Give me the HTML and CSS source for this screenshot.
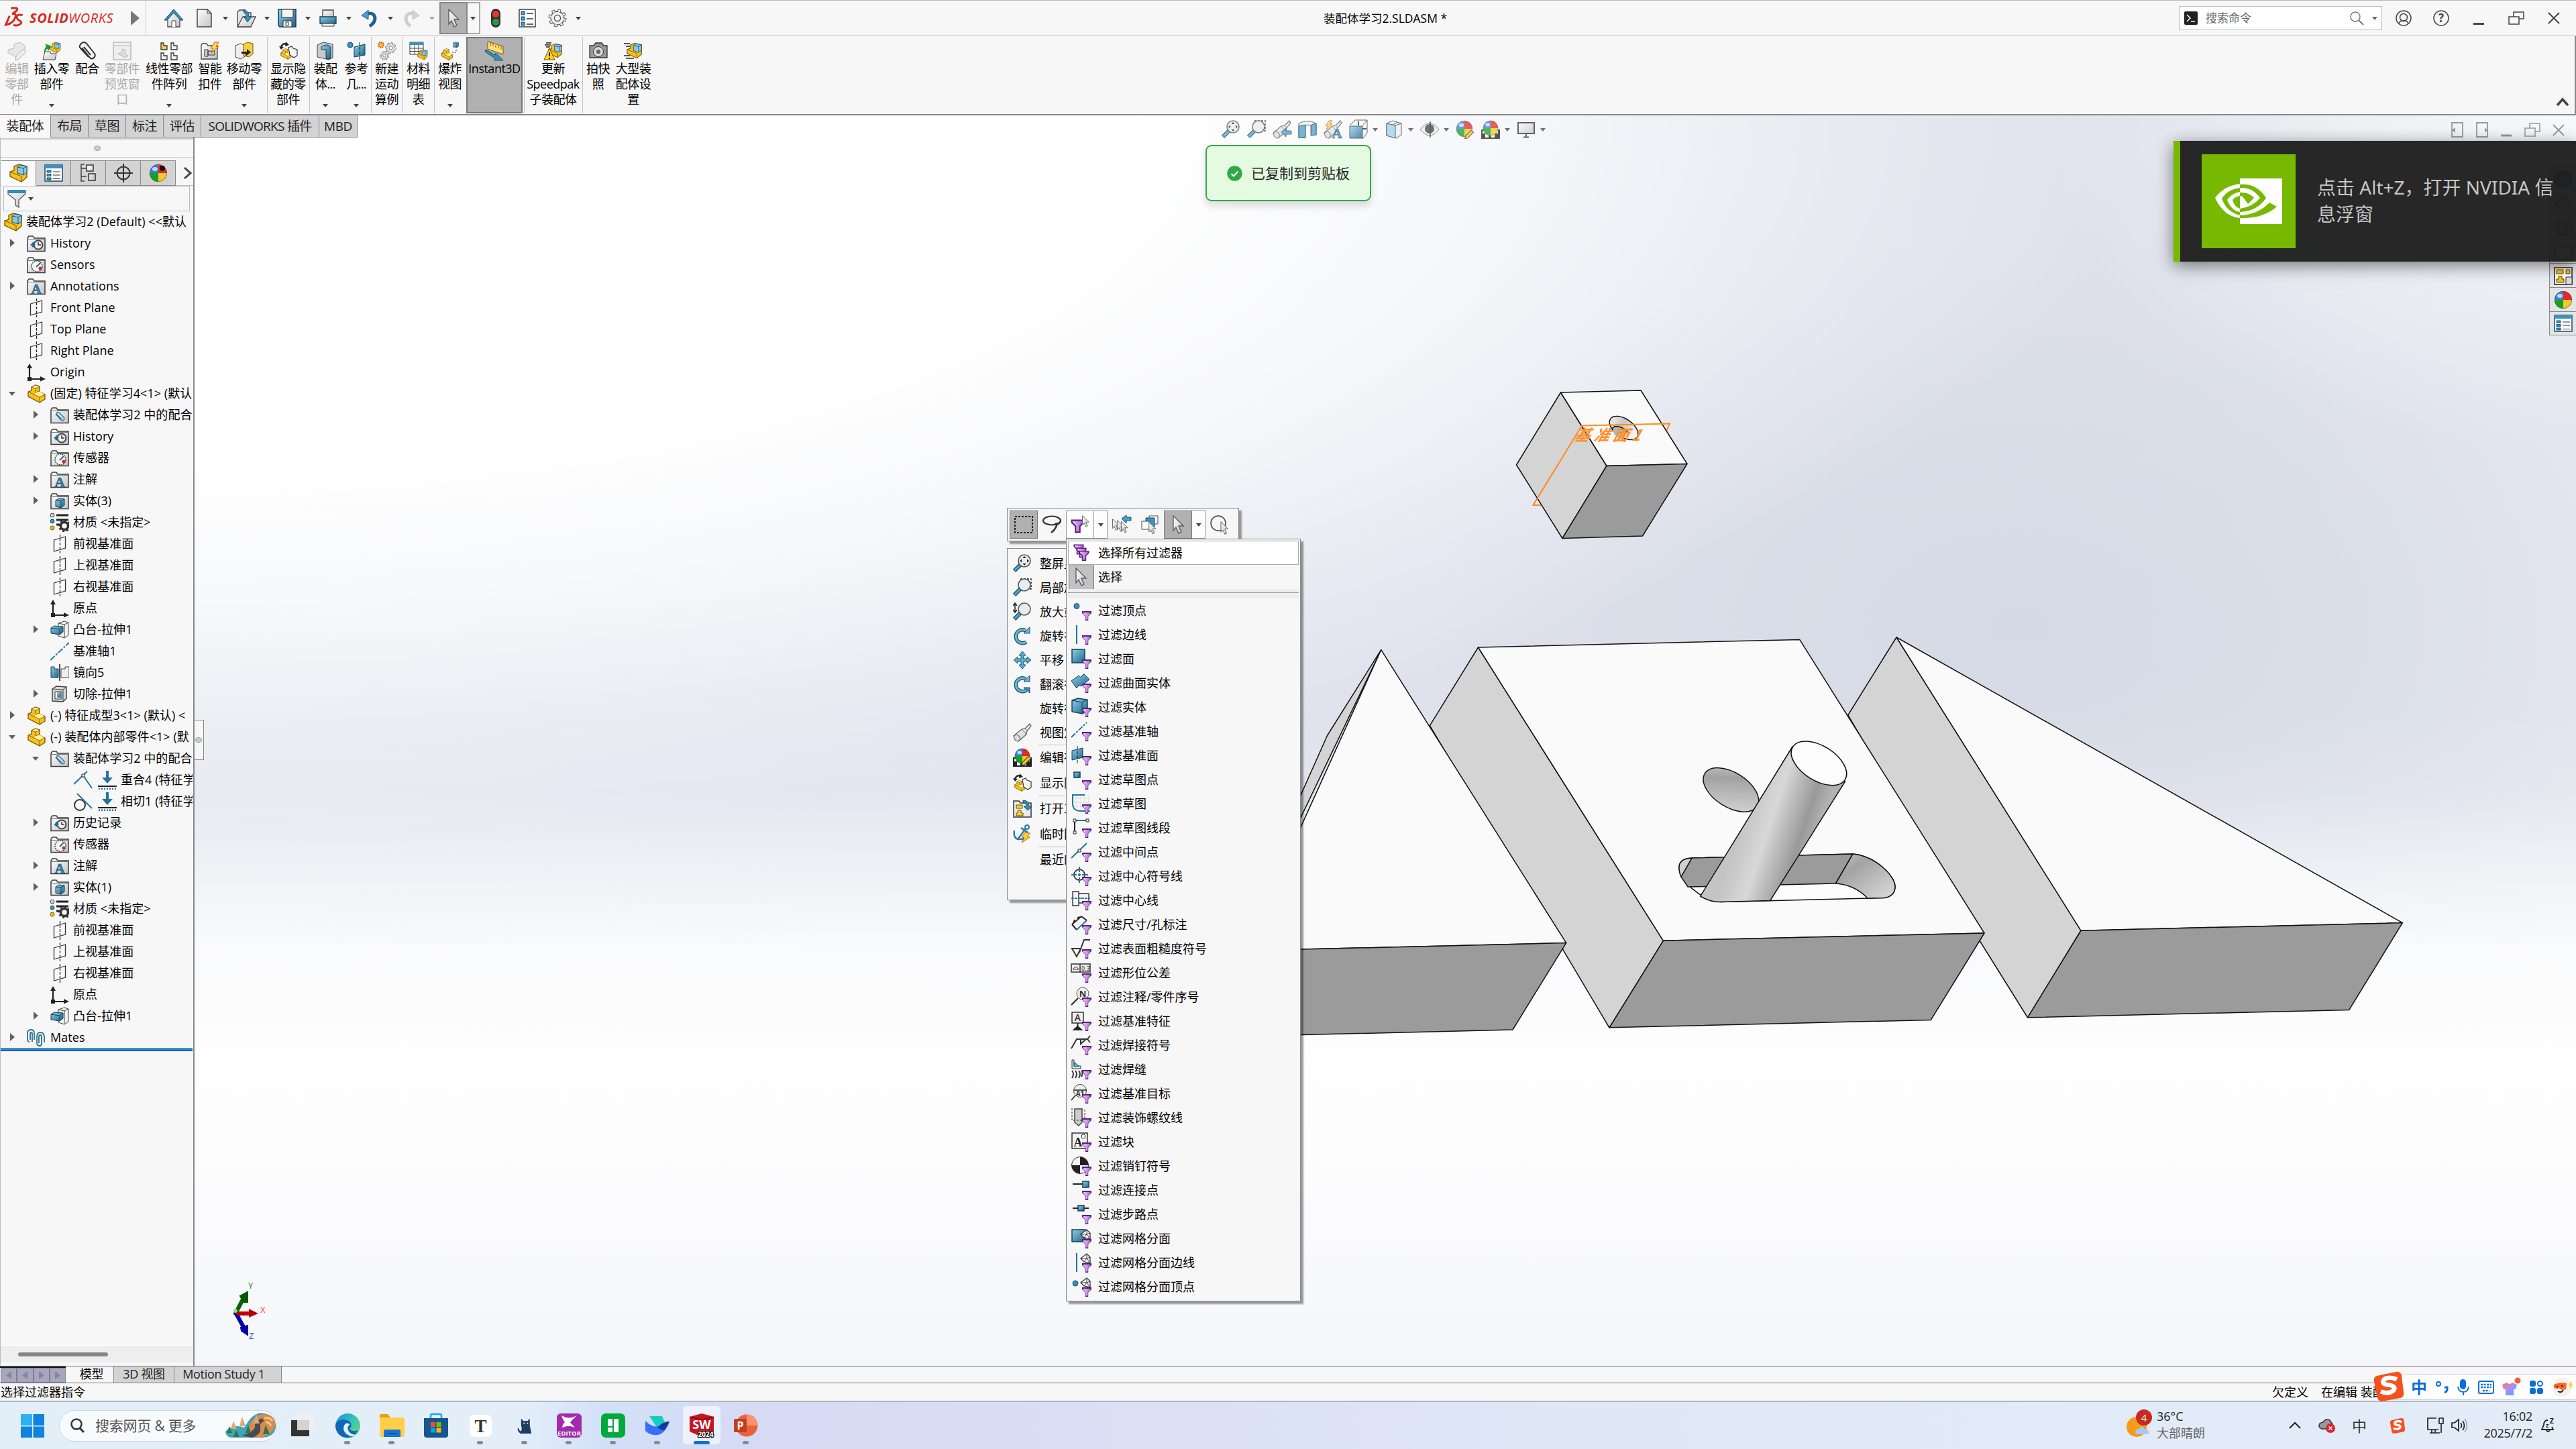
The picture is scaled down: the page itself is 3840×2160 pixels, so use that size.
FILE: index.html
```html
<!DOCTYPE html>
<html lang="zh-CN">
<head>
<meta charset="utf-8">
<title>装配体学习2.SLDASM</title>
<link rel="stylesheet" href="styles.css">
</head>
<body>
<svg class="defs" width="0" height="0">
<defs>
<linearGradient id="gb" x1="0" y1="0" x2="1" y2="1"><stop offset="0" stop-color="#8fd0ec"/><stop offset="1" stop-color="#1f6285"/></linearGradient>
<linearGradient id="gg" x1="0" y1="0" x2="1" y2="1"><stop offset="0" stop-color="#fff"/><stop offset="1" stop-color="#c4c4c8"/></linearGradient>
<linearGradient id="gp" x1="0" y1="0" x2="1" y2="0"><stop offset="0" stop-color="#edc8fa"/><stop offset="1" stop-color="#a45cc8"/></linearGradient>
<linearGradient id="rod" gradientUnits="userSpaceOnUse" x1="2600" y1="1220" x2="2705" y2="1255"><stop offset="0" stop-color="#c4c4c4"/><stop offset=".35" stop-color="#d8d8d8"/><stop offset=".8" stop-color="#999"/><stop offset="1" stop-color="#b2b2b2"/></linearGradient>
<linearGradient id="hole" x1="0" y1="0" x2="1" y2="1"><stop offset="0" stop-color="#ccc"/><stop offset=".3" stop-color="#a2a2a2"/><stop offset="1" stop-color="#dcdcdc"/></linearGradient>
<linearGradient id="bore" x1="0" y1="0" x2="1" y2="0"><stop offset="0" stop-color="#f0f0f0"/><stop offset=".4" stop-color="#c6c6c6"/><stop offset="1" stop-color="#fdfdfd"/></linearGradient>
<linearGradient id="edge" x1="0" y1="0" x2="1" y2="1"><stop offset="0" stop-color="#1c90dc"/><stop offset=".5" stop-color="#37c7b6"/><stop offset="1" stop-color="#76dc61"/></linearGradient>
<linearGradient id="shirt" x1="0" y1="0" x2="1" y2="1"><stop offset="0" stop-color="#ff7a4d"/><stop offset=".5" stop-color="#a98cff"/><stop offset="1" stop-color="#2fb0ff"/></linearGradient>
<symbol id="funnel" viewBox="0 0 13 13"><path d="M1 1h11v2L8.500 6.500v5.500h-4V6.500L1 3z" fill="url(#gp)" stroke="#5b1f7c" stroke-width="1.300"/></symbol>
<symbol id="folder" viewBox="0 0 28 28"><path d="M1 25.500V6l2-3h6l2 3h16v19.500z" fill="url(#gg)" stroke="#3c3c3c" stroke-width="1.500"/><path d="M1 7.500h26" stroke="#777"/></symbol>
<symbol id="hist" viewBox="0 0 28 28"><use href="#folder"/><circle cx="17" cy="16" r="6.500" fill="#eee" stroke="#444" stroke-width="2"/><path d="M17 12v4h4" fill="none" stroke="#333" stroke-width="1.500"/><path d="M5 15l4 5 4-5h-2l2-4c-3 0-5 1-6 4z" fill="#1f6d95"/></symbol>
<symbol id="sens" viewBox="0 0 28 28"><use href="#folder"/><circle cx="15" cy="16" r="8" fill="#f6f6f6" stroke="#444" stroke-width="1.500" stroke-dasharray="2 1.300"/><path d="M14 17l6-6" stroke="#1f6d95" stroke-width="2"/><circle cx="20" cy="19" r="2.500" fill="#d22"/></symbol>
<symbol id="ann" viewBox="0 0 28 28"><use href="#folder"/><text x="14" y="25" text-anchor="middle" class="serif" font-size="21" fill="#3788b0" stroke="#17506e" stroke-width=".7">A</text></symbol>
<symbol id="body" viewBox="0 0 28 28"><use href="#folder"/><path d="M8 13l5-3 8 1v9l-5 4-8-2z" fill="url(#gb)" stroke="#123f58"/><path d="M8 13l8 1v10M16 14l5-3" fill="none" stroke="#123f58"/></symbol>
<symbol id="matef" viewBox="0 0 28 28"><use href="#folder"/><path d="M8 12l7 8q3 3 5 1t-1-5l-6-6q-2-1-3 0t0 3l7 7" fill="none" stroke="#2b7ca4" stroke-width="1.500"/></symbol>
<symbol id="plane" viewBox="0 0 28 28"><path d="M5.500 8l17-5v17l-17 5z" fill="#fafafa" stroke="#333" stroke-width="1.300"/><path d="M14.500 0v28" stroke="#222" stroke-width="1.300" stroke-dasharray="4 2"/></symbol>
<symbol id="orig" viewBox="0 0 28 28"><path d="M4 24V7M4 24h18" stroke="#222" stroke-width="2.200" fill="none"/><path d="M0 8l4-7 4 7zM20 20l8 4-8 3.500zM1 21h6v6H1z" fill="#222"/></symbol>
<symbol id="part" viewBox="0 0 28 28"><path d="M2 11l5-2V4l6-3 6 2v8l8 4v7l-8 5L2 18z" fill="#f5c21d" stroke="#7a5500" stroke-width="1.300"/><path d="M2 11l17 8v8M19 19l8-4M7 4l6 2 6-3M13 6v6l6-2" fill="none" stroke="#8a6300"/><path d="M8 4l5-2.500L18 3l-5 2.500zM14 12l5-1.500 7 4-7 4-8-4z" fill="#fff0a0"/></symbol>
<symbol id="asm" viewBox="0 0 28 28"><path d="M1 12l6-2V4l7-3 12 3v16l-8 7L1 19z" fill="#f5c21d" stroke="#7a5500" stroke-width="1.300"/><path d="M1 12l17 7v8" fill="none" stroke="#7a5500"/><path d="M12 5l5-3 9 2v9l-5 4-9-3z" fill="#8cc8e6" stroke="#174e6b"/><path d="M12 5l9 2v10M21 7l5-3" fill="none" stroke="#174e6b"/></symbol>
<symbol id="mat" viewBox="0 0 28 28"><path d="M9 3h18M9 10h18M9 17h6" stroke="#222" stroke-width="3"/><circle cx="3" cy="3" r="3" fill="#ccc" stroke="#444"/><circle cx="3" cy="12" r="3" fill="#3a93c0" stroke="#174e6b"/><circle cx="3" cy="22" r="3" fill="#f3bd10" stroke="#7a5500"/><circle cx="21" cy="19" r="5.500" fill="none" stroke="#333" stroke-width="3.500"/><circle cx="21" cy="19" r="8" fill="none" stroke="#333" stroke-width="2.500" stroke-dasharray="3 3.200"/></symbol>
<symbol id="boss" viewBox="0 0 28 28"><path d="M12 4l9-3 6 2v19l-6 4-9-3z" fill="#f0f0f0" stroke="#444"/><path d="M12 4l9 2v20M21 6l6-3" fill="none" stroke="#444"/><path d="M1 11l5-3 13 1v8l-5 4-13-2z" fill="url(#gb)" stroke="#123f58"/><path d="M1 11l13 2v8M14 13l5-4" fill="none" stroke="#123f58"/></symbol>
<symbol id="cut" viewBox="0 0 28 28"><path d="M3 6l6-4 15 1v17l-5 5-16-1z" fill="#d8d8d8" stroke="#444" stroke-width="1.500"/><path d="M3 6l16 1v18M19 7l5-4" fill="none" stroke="#444"/><path d="M7 10h10v11H7z" fill="#fff" stroke="#333"/><path d="M10 11h6v8h-6z" fill="url(#gb)"/></symbol>
<symbol id="axis" viewBox="0 0 28 28"><path d="M0 27L28 1" stroke="#25749c" stroke-width="2" stroke-dasharray="9 2 3 2"/></symbol>
<symbol id="mirror" viewBox="0 0 28 28"><path d="M1 5h5v3h6v13H1z" fill="url(#gb)" stroke="#123f58"/><path d="M28 5h-6v3h-6v13h12z" fill="#eee" stroke="#444"/><path d="M14 1v25" stroke="#111" stroke-width="1.500"/></symbol>
<symbol id="coin" viewBox="0 0 28 28"><path d="M0 20L20 1M14 7l13 19" stroke="#25749c" stroke-width="2"/><path d="M12 5h4v4h-4z" fill="#fff" stroke="#222"/></symbol>
<symbol id="tang" viewBox="0 0 28 28"><circle cx="9" cy="19" r="8" fill="none" stroke="#333" stroke-width="2"/><path d="M5 2l22 22" stroke="#25749c" stroke-width="2"/></symbol>
<symbol id="ground" viewBox="0 0 28 28"><path d="M12 0h4v10h6l-8 9-8-9h6z" fill="#25749c"/><path d="M0 23h28" stroke="#222" stroke-width="2"/><path d="M1 27h26" stroke="#25749c" stroke-width="3" stroke-dasharray="2 2"/></symbol>
<symbol id="mates" viewBox="0 0 28 28"><path d="M4 20q-3 0-3-4V7q0-5 5-5t5 5v10M5 17V8q0-2 1.500-2t1.500 2v12M18 22V12q0-2 2-2t2 2v11q0 3-3 3t-4-3V12q0-6 5-6t6 6v9" fill="none" stroke="#2b7390" stroke-width="1.800"/></symbol>
<symbol id="props" viewBox="0 0 28 28"><path d="M1 2h26v24H1z" fill="#fff" stroke="#174e6b" stroke-width="1.500"/><path d="M1 2h26v5H1z" fill="#3a93c0"/><path d="M4 10h6v3H4zM4 15.500h6v3H4zM4 21h6v3H4z" fill="#3a93c0" stroke="#174e6b"/><path d="M13 12h11M13 17h11M13 22.500h11" stroke="#333"/></symbol>
<symbol id="config" viewBox="0 0 28 28"><path d="M8 1H3v25h5M3 7h8M3 19h8" fill="none" stroke="#444" stroke-width="1.500"/><path d="M11 2h10v9H11zM14 15h10v10H14z" fill="url(#gg)" stroke="#333" stroke-width="1.500"/></symbol>
<symbol id="target" viewBox="0 0 28 28"><circle cx="14" cy="14" r="9.500" fill="none" stroke="#333" stroke-width="2"/><path d="M0 14h28M14 0v28" stroke="#333" stroke-width="2"/></symbol>
<symbol id="ball" viewBox="0 0 28 28"><path d="M14 14V1A13 13 0 0 0 1 14z" fill="#3b7de0"/><path d="M14 14V1a13 13 0 0 1 13 13z" fill="#e22b25"/><path d="M14 14H1a13 13 0 0 0 13 13z" fill="#12a31f"/><path d="M14 14h13a13 13 0 0 1-13 13z" fill="#f0c92c"/><circle cx="14" cy="14" r="12.700" fill="none" stroke="#444" stroke-opacity=".6"/><ellipse cx="9" cy="8" rx="4" ry="3" fill="#fff" opacity=".7"/></symbol>
<symbol id="cursor" viewBox="0 0 28 28"><path d="M7 1l15 15h-7l4 9-4 2-4-9-4 5z" fill="url(#gg)" stroke="#555" stroke-width="1.300"/></symbol>
<symbol id="zoomg" viewBox="0 0 28 28"><path d="M2 25l9-9" stroke="#123f58" stroke-width="6"/><path d="M2.500 24.500l8-8" stroke="#4aa3cc" stroke-width="3.500"/><circle cx="17" cy="10" r="9" fill="#e4edf3" stroke="#555" stroke-width="1.600"/></symbol>
<symbol id="zfit" viewBox="0 0 28 28"><use href="#zoomg"/><path d="M17 3l2.500 3h-5zM17 17l2.500-3h-5zM10 10l3-2.500v5zM24 10l-3-2.500v5z" fill="#222"/></symbol>
<symbol id="zarea" viewBox="0 0 28 28"><path d="M11 1h16v15h-4" fill="none" stroke="#222" stroke-width="1.500" stroke-dasharray="3 2"/><use href="#zoomg"/></symbol>
<symbol id="zinout" viewBox="0 0 28 28"><use href="#zoomg"/><path d="M3 2v12M0 5l3-4 3 4M0 11l3 4 3-4" stroke="#222" fill="none" stroke-width="1.500"/></symbol>
<symbol id="rot" viewBox="0 0 28 28"><path d="M20 23a10 10 0 1 1-1-17" fill="none" stroke="#174e6b" stroke-width="5.500"/><path d="M20 23a10 10 0 1 1-1-17" fill="none" stroke="#6bb7d8" stroke-width="3"/><path d="M16 10h9V1z" fill="#6bb7d8" stroke="#174e6b"/></symbol>
<symbol id="roll" viewBox="0 0 28 28"><use href="#rot"/><path d="M16 19h9v8z" fill="#3a8fb8" stroke="#174e6b"/></symbol>
<symbol id="pan" viewBox="0 0 28 28"><path d="M14 1l5 6h-3v5h5V9l6 5-6 5v-3h-5v5h3l-5 6-5-6h3v-5H7v3l-6-5 6-5v3h5V7H9z" fill="#5dabd0" stroke="#174e6b"/></symbol>
<symbol id="scope" viewBox="0 0 28 28"><path d="M1 19L13 9l5-1 7-7 2 3-6 8-1 5L8 27q-5-1-7-8z" fill="url(#gg)" stroke="#555" stroke-width="1.200"/><ellipse cx="6" cy="22" rx="4" ry="5" transform="rotate(-30 6 22)" fill="#ddd" stroke="#555"/><path d="M13 9l7 8M18 8l3 4" stroke="#777"/></symbol>
<symbol id="pencil" viewBox="0 0 14 14"><path d="M1 13l1-4 8-8 3 3-8 8z" fill="#f3c03a" stroke="#553c10"/></symbol>
<symbol id="appear" viewBox="0 0 28 28"><use href="#ball" x="0" y="0" width="26" height="26"/><use href="#pencil" x="12" y="14" width="16" height="15"/></symbol>
<symbol id="scene" viewBox="0 0 28 28"><path d="M0 14h28v14H0z" fill="#222"/><path d="M2 16h5v4H2zM20 16h5v4h-5zM6 21h5v5H6zM15 21h5v5h-5z" fill="#fff"/><use href="#ball" x="2" y="0" width="24" height="24"/></symbol>
<symbol id="editapp" viewBox="0 0 28 28"><use href="#scene"/><use href="#pencil" x="12" y="11" width="16" height="16"/></symbol>
<symbol id="showhide" viewBox="0 0 28 28"><use href="#part" x="1" y="10" width="18" height="17"/><path d="M14 9l5-2 2 3 6 2v9l-5 3-6-4z" fill="#f4f4f4" stroke="#333" stroke-width="1.200"/><path d="M3 9q2-8 9-5" fill="none" stroke="#222" stroke-width="2.500"/><path d="M0 7l3 5 4-4zM10 0l5 5-6 2z" fill="#222"/></symbol>
<symbol id="openasm" viewBox="0 0 28 28"><path d="M1 3h8l2 3h16v21H1z" fill="#ececec" stroke="#333" stroke-width="1.500"/><path d="M5 9h9v5H5zM7 17h5v4h3v4H5v-4h2z" fill="#f6cf3c" stroke="#6a4d00"/><path d="M15 2q9 0 9 9h4l-6 6-6-6h4q0-5-5-6z" fill="#3a8fb8" stroke="#174e6b"/></symbol>
<symbol id="anchor" viewBox="0 0 28 28"><circle cx="21" cy="4" r="3" fill="none" stroke="#2b7ca4" stroke-width="2"/><path d="M19 6L8 21M12 5l10 7M2 9q-2 14 9 13 6 0 9-3" fill="none" stroke="#2b7ca4" stroke-width="2.500"/><path d="M18 12l8 1-5 5 4 1-12 8 4-7-4-1z" fill="#ffd23c" stroke="#b85e00"/></symbol>
<symbol id="cube" viewBox="0 0 28 28"><path d="M1 4l9-3 14 2v15l-7 6L1 21z" fill="url(#gb)" stroke="#123f58" stroke-width="1.400"/><path d="M1 4l15 3v17M16 7l8-4" fill="none" stroke="#123f58"/></symbol>
<symbol id="mesh" viewBox="0 0 16 16"><path d="M1 8l9-7 5 5v9L6 13z" fill="#fff" stroke="#333" stroke-width="1.300"/><path d="M1 8h9l5-2M10 1v7l5 7M10 8l-4 5" fill="none" stroke="#333"/></symbol>
<symbol id="gear" viewBox="0 0 28 28"><circle cx="14" cy="14" r="11" fill="none" stroke="#555" stroke-width="5" stroke-dasharray="4.600 4.040"/><circle cx="14" cy="14" r="10" fill="#eee" stroke="#555" stroke-width="1.300"/><circle cx="14" cy="14" r="11" fill="none" stroke="#eee" stroke-width="3" stroke-dasharray="3 5.640" stroke-dashoffset="-.8"/><circle cx="14" cy="14" r="4.500" fill="#fafafa" stroke="#555" stroke-width="1.400"/></symbol>
<symbol id="sogou" viewBox="0 0 28 28"><path d="M3 5L21 1q3 0 4 3l2 17q0 3-3 4L8 28q-3 0-4-3L1 9q0-3 2-4z" fill="#f4511e"/><path d="M21 8q-7-3-11 0-3 4 3 5 8 1 5 5-4 4-11 1" fill="none" stroke="#fff" stroke-width="4"/></symbol>
<symbol id="bolt" viewBox="0 0 14 18"><path d="M7 1h6L9 7h4L2 17l3-7H1z" fill="#ffd84c" stroke="#c75a10"/></symbol>
<symbol id="home" viewBox="0 0 28 28"><path d="M5 14v13h18V14l-9-9z" fill="url(#gg)" stroke="#444" stroke-width="1.300"/><path d="M11 27v-9h6v9" fill="#fff" stroke="#444"/><path d="M14 1L0 17h4L14 6l10 11h4z" fill="#3a93c0" stroke="#123f58"/></symbol>
</defs>
</svg>

<header class="titlebar">
  <div class="brand">
    <svg class="ds" viewBox="0 0 32 32"><path d="M9 2h8q4 1 0 5l-6 4q7-1 5 5-3 10-15 12L7 14M27 13q-9-2-9 3 0 3 5 6t-2 6q-4 2-8 0" fill="none" stroke="#d8281e" stroke-width="3"/></svg>
    <span class="wordmark"><b>SOLID</b>WORKS</span>
    <svg class="play" viewBox="0 0 13 22"><path d="M0 0l13 11L0 22z" fill="#777"/></svg>
  </div>
  <nav class="quick">
    <svg class="i q1"><use href="#home"/></svg>
    <svg class="i q2" viewBox="0 0 28 28"><path d="M3 1h15l6 6v20H3z" fill="url(#gg)" stroke="#444" stroke-width="1.500"/><path d="M18 1v6h6" fill="none" stroke="#444"/></svg><i class="dd"></i>
    <svg class="i q3" viewBox="0 0 28 28"><path d="M1 27V5l3-3h7v4h10v21z" fill="#e5e5e5" stroke="#444" stroke-width="1.300"/><path d="M1 27L9 12h19l-7 15z" fill="url(#gg)" stroke="#444" stroke-width="1.300"/><path d="M11 1q7 3 7 11h4l-6 8-6-8h4q0-6-5-9z" fill="#3a8fb8" stroke="#174e6b"/></svg><i class="dd"></i>
    <svg class="i q4" viewBox="0 0 28 28"><path d="M1 1h26v26H3l-2-2z" fill="url(#gb)" stroke="#123f58" stroke-width="1.500"/><path d="M6 1h17v12H6zM8 18h13v9H8z" fill="#f4f4f4" stroke="#333"/><path d="M12 20h4v5h-4z" fill="#fff" stroke="#333"/></svg><i class="dd"></i>
    <svg class="i q5" viewBox="0 0 28 28"><path d="M6 13V2h16v11" fill="url(#gg)" stroke="#444" stroke-width="1.300"/><path d="M2 12h24v10H2z" fill="url(#gb)" stroke="#123f58" stroke-width="1.300"/><path d="M5 22h18v4H5z" fill="#fff" stroke="#333"/></svg><i class="dd"></i>
    <svg class="i q6" viewBox="0 0 28 28"><path d="M7 9q13-6 15 5 0 7-8 12" fill="none" stroke="#1f6285" stroke-width="5"/><path d="M2 10L12 2v14z" fill="#4a9ec6" stroke="#1f6285"/></svg><i class="dd"></i>
    <svg class="i q7" viewBox="0 0 28 28"><path d="M21 9Q8 3 6 14q0 7 7 12" fill="none" stroke="#cfcfcf" stroke-width="5"/><path d="M26 10L16 2v14z" fill="#d5d5d5" stroke="#c0c0c0"/></svg><i class="dd faint"></i>
    <span class="pick"><svg class="i"><use href="#cursor"/></svg></span><span class="pickdd"><i class="dd"></i></span>
    <svg class="i q8" viewBox="0 0 28 28"><rect x="7" y="0" width="14" height="28" rx="7" fill="#333"/><circle cx="14" cy="8" r="5" fill="#e33a28"/><circle cx="14" cy="20" r="5" fill="#2a9a40"/></svg>
    <svg class="i q9" viewBox="0 0 28 28"><path d="M2 1h24v26H2z" fill="#fff" stroke="#444" stroke-width="1.500"/><path d="M5 4h5v5H5zM5 12h5v5H5zM5 20h5v5H5z" fill="#4a9ec6" stroke="#123f58"/><path d="M13 7h10M13 15h10M13 23h10" stroke="#333" stroke-width="1.500"/></svg>
    <svg class="i q10"><use href="#gear"/></svg><i class="dd"></i>
  </nav>
  <div class="doctitle">装配体学习2.SLDASM *</div>
  <div class="search"><svg class="prompt" viewBox="0 0 20 20"><rect width="20" height="20" rx="2" fill="#222"/><path d="M4 5l5 5-5 5M10 15h6" fill="none" stroke="#fff" stroke-width="1.500"/></svg><span>搜索命令</span><svg class="mag" viewBox="0 0 20 20"><circle cx="8" cy="8" r="7" fill="none" stroke="#777" stroke-width="1.500"/><path d="M13 13l7 7" stroke="#777" stroke-width="2"/></svg><i class="dd"></i></div>
  <div class="winctl">
    <svg width="24" height="24" viewBox="0 0 24 24"><g fill="none" stroke="#444" stroke-width="1.500"><circle cx="12" cy="12" r="11"/><circle cx="12" cy="11" r="5.500"/><path d="M5 20q2-5 7-4 5-1 7 4"/></g></svg>
    <svg width="24" height="24" viewBox="0 0 24 24"><circle cx="12" cy="12" r="11" fill="none" stroke="#444" stroke-width="1.500"/><text x="12" y="18" text-anchor="middle" font-size="17" font-weight="700" fill="#444">?</text></svg>
    <svg width="24" height="24" viewBox="0 0 24 24"><path d="M4 20.500h16" stroke="#444" stroke-width="3"/></svg>
    <svg width="24" height="24" viewBox="0 0 24 24"><g fill="none" stroke="#444" stroke-width="1.500"><path d="M1 10h15v11H1zM8 10V3h15v10h-7"/></g></svg>
    <svg width="24" height="24" viewBox="0 0 24 24"><path d="M4 4l16 16M20 4L4 20" stroke="#333" stroke-width="1.800"/></svg>
  </div>
</header>

<section class="ribbon">
  <div class="cmd off w50"><svg class="i" viewBox="0 0 28 28"><path d="M1 12l9-2V4l8-3 8 5v10l-9 9-4-2-12-6z" fill="#e8e8e8" stroke="#bbb"/><path d="M13 22l11-11 4 4-11 11-5 2z" fill="#eee" stroke="#aaa"/></svg><span>编辑</span><span>零部</span><span>件</span></div>
  <div class="cmd w54"><svg class="i" viewBox="0 0 28 28"><use href="#asm" x="11" y="0" width="17" height="18"/><path d="M1 27l3-12h8l1 3h8l-2 9z" fill="url(#gg)" stroke="#444"/><path d="M4 15q0-7 5-7M6 5l6 2-3 5z" fill="#1d9c2a" stroke="#1d9c2a" stroke-width="2"/></svg><span>插入零</span><span>部件</span><i class="dd"></i></div>
  <div class="cmd w52"><svg class="i" viewBox="0 0 28 28"><path d="M6 9l12 15q3 3 6 0t1-6L13 3Q9-1 5 3t-1 7l12 13M9 8l10 12" fill="none" stroke="#333" stroke-width="2"/></svg><span>配合</span></div>
  <div class="cmd off w52"><svg class="i" viewBox="0 0 28 28"><path d="M1 1h26v26H1z" fill="#eee" stroke="#bbb" stroke-width="1.500"/><path d="M1 6h26M8 18l6-2v-5l5 1v6l4 3-5 3z" fill="#ddd" stroke="#bbb"/></svg><span>零部件</span><span>预览窗</span><span>口</span></div>
  <div class="cmd w88"><svg class="i" viewBox="0 0 28 28"><g fill="#eee" stroke="#333" stroke-width="1.300"><path d="M2 2h4v4h5v6H2z" fill="#f6cf3c"/><path d="M17 2h4v4h5v6h-9zM2 17h4v4h5v6H2zM17 17h4v4h5v6h-9z"/></g></svg><span>线性零部</span><span>件阵列</span><i class="dd"></i></div>
  <div class="cmd w34"><svg class="i" viewBox="0 0 28 28"><path d="M1 26V5l2-2h6l2 3h14v20z" fill="url(#gg)" stroke="#444" stroke-width="1.300"/><path d="M6 12h5v10H6zM11 14h10v6H11z" fill="#ccc" stroke="#333"/><use href="#bolt" x="14" y="0" width="14" height="18"/></svg><span>智能</span><span>扣件</span></div>
  <div class="cmd w68"><svg class="i" viewBox="0 0 28 28"><path d="M1 6l7-3 7 2v17l-6 4-8-3z" fill="#eee" stroke="#444"/><path d="M13 4l6-3 8 2v15l-6 5-8-2z" fill="#f6cf3c" stroke="#7a5500"/><path d="M10 15h8v-4l6 5-8 6v-4h-6z" fill="#222"/></svg><span>移动零</span><span>部件</span><i class="dd"></i></div>
  <div class="cmd sep w63"><svg class="i"><use href="#showhide"/></svg><span>显示隐</span><span>藏的零</span><span>部件</span></div>
  <div class="cmd sep w48"><svg class="i" viewBox="0 0 28 28"><path d="M2 5l9-4 14 3v20l-6 3-17-4z" fill="#c9c9c9" stroke="#444"/><path d="M8 8q8-6 14 0v17q-4 2-7 0V12H8z" fill="url(#gb)" stroke="#123f58"/></svg><span>装配</span><span>体...</span><i class="dd"></i></div>
  <div class="cmd w44"><svg class="i" viewBox="0 0 28 28"><circle cx="5" cy="5" r="4" fill="#3a93c0" stroke="#174e6b"/><path d="M11 8l16-4v16l-16 3z" fill="url(#gb)" stroke="#123f58"/><path d="M19 1v26" stroke="#222" stroke-dasharray="5 2"/></svg><span>参考</span><span>几...</span><i class="dd"></i></div>
  <div class="cmd sep w47"><svg class="i" viewBox="0 0 28 28"><circle cx="5" cy="5" r="4" fill="#ffb63c" stroke="#d06a10" stroke-dasharray="2 1" stroke-width="2"/><use href="#gear" x="11" y="1" width="17" height="17"/><use href="#gear" x="3" y="14" width="14" height="14"/></svg><span>新建</span><span>运动</span><span>算例</span></div>
  <div class="cmd sep w47"><svg class="i" viewBox="0 0 28 28"><path d="M1 1h20v18H1z" fill="#fff" stroke="#333"/><path d="M1 1h20v4H1z" fill="#3a93c0"/><path d="M1 10h20M1 14.500h20M8 5v14M14 5v14" stroke="#444"/><use href="#asm" x="12" y="11" width="16" height="17"/></svg><span>材料</span><span>明细</span><span>表</span></div>
  <div class="cmd sep w47"><svg class="i" viewBox="0 0 28 28"><use href="#part" x="0" y="10" width="18" height="18"/><use href="#cube" x="18" y="0" width="10" height="11"/><path d="M23 12v4h-8" fill="none" stroke="#222" stroke-dasharray="2 2"/></svg><span>爆炸</span><span>视图</span><i class="dd"></i></div>
  <div class="cmd on w84"><svg class="i" viewBox="0 0 28 28"><path d="M4 0l23 7v12L4 11z" fill="#ffe27a" stroke="#7a5500"/><path d="M8 2v5M12 3v4M16 5v4M20 6v4M24 7v5" stroke="#7a5500"/><path d="M1 12l14 8 1-3 11 11-13 0 1-3L0 15z" fill="#3a8fb8" stroke="#174e6b"/></svg><span>Instant3D</span></div>
  <div class="cmd sep w87"><svg class="i" viewBox="0 0 28 28"><use href="#asm" x="6" y="0" width="22" height="27"/><path d="M3 2h8M1 5h9M3 8h6" stroke="#222" stroke-width="1.500"/><path d="M8 10l8 17H0z" fill="#ffd21c" stroke="#7a5500"/><path d="M8 16v6M8 24v2" stroke="#222" stroke-width="2"/></svg><span>更新</span><span>Speedpak</span><span>子装配体</span></div>
  <div class="cmd sep w47"><svg class="i" viewBox="0 0 28 28"><path d="M1 6h6l3-4h9l3 4h5v18H1z" fill="#999" stroke="#333" stroke-width="1.300"/><circle cx="14" cy="15" r="7.500" fill="#ddd" stroke="#333"/><circle cx="14" cy="15" r="4" fill="#666" stroke="#eee"/></svg><span>拍快</span><span>照</span></div>
  <div class="cmd w58"><svg class="i" viewBox="0 0 28 28"><use href="#asm" x="4" y="0" width="24" height="27"/><path d="M0 3h9M3 7h7M0 21h9M3 25h12" stroke="#222" stroke-width="1.500"/></svg><span>大型装</span><span>配体设</span><span>置</span></div>
  <svg class="collapse" width="20" height="14" viewBox="0 0 20 14"><path d="M2 12l8-9 8 9" fill="none" stroke="#444" stroke-width="3.500"/></svg>
</section>

<main class="work">
  <div class="cmtabs"><b class="cur">装配体</b><b>布局</b><b>草图</b><b>标注</b><b>评估</b><b>SOLIDWORKS 插件</b><b>MBD</b></div>
  <aside class="panel">
    <div class="grip"><i></i></div>
    <div class="ptabs">
      <span class="cur"><svg class="i"><use href="#asm"/></svg></span><span><svg class="i"><use href="#props"/></svg></span><span><svg class="i"><use href="#config"/></svg></span><span><svg class="i"><use href="#target"/></svg></span><span><svg class="i" viewBox="0 0 28 28"><use href="#ball"/><circle cx="20" cy="7" r="4" fill="#200"/></svg></span>
      <svg class="more" width="14" height="20" viewBox="0 0 14 20"><path d="M2 2l9 8-9 8" fill="none" stroke="#444" stroke-width="3"/></svg>
    </div>
    <div class="filter"><svg class="i" viewBox="0 0 28 28"><path d="M1 2h26v5l-10 9v11l-5-3v-8L1 7z" fill="url(#gg)" stroke="#555" stroke-width="1.300"/><path d="M1 1h26v5H1z" fill="#2f8dba"/></svg><i class="dd"></i></div>
    <ul class="tree">
      <li class="root"><svg class="i"><use href="#asm"/></svg>装配体学习2 (Default) &lt;&lt;默认</li>
      <li><i class="r"></i><svg class="i"><use href="#hist"/></svg>History</li>
      <li><i></i><svg class="i"><use href="#sens"/></svg>Sensors</li>
      <li><i class="r"></i><svg class="i"><use href="#ann"/></svg>Annotations</li>
      <li><i></i><svg class="i"><use href="#plane"/></svg>Front Plane</li>
      <li><i></i><svg class="i"><use href="#plane"/></svg>Top Plane</li>
      <li><i></i><svg class="i"><use href="#plane"/></svg>Right Plane</li>
      <li><i></i><svg class="i"><use href="#orig"/></svg>Origin</li>
      <li><i class="d"></i><svg class="i"><use href="#part"/></svg>(固定) 特征学习4&lt;1&gt; (默认</li>
      <li class="l2"><i class="r"></i><svg class="i"><use href="#matef"/></svg>装配体学习2 中的配合</li>
      <li class="l2"><i class="r"></i><svg class="i"><use href="#hist"/></svg>History</li>
      <li class="l2"><i></i><svg class="i"><use href="#sens"/></svg>传感器</li>
      <li class="l2"><i class="r"></i><svg class="i"><use href="#ann"/></svg>注解</li>
      <li class="l2"><i class="r"></i><svg class="i"><use href="#body"/></svg>实体(3)</li>
      <li class="l2"><i></i><svg class="i"><use href="#mat"/></svg>材质 &lt;未指定&gt;</li>
      <li class="l2"><i></i><svg class="i"><use href="#plane"/></svg>前视基准面</li>
      <li class="l2"><i></i><svg class="i"><use href="#plane"/></svg>上视基准面</li>
      <li class="l2"><i></i><svg class="i"><use href="#plane"/></svg>右视基准面</li>
      <li class="l2"><i></i><svg class="i"><use href="#orig"/></svg>原点</li>
      <li class="l2"><i class="r"></i><svg class="i"><use href="#boss"/></svg>凸台-拉伸1</li>
      <li class="l2"><i></i><svg class="i"><use href="#axis"/></svg>基准轴1</li>
      <li class="l2"><i></i><svg class="i"><use href="#mirror"/></svg>镜向5</li>
      <li class="l2"><i class="r"></i><svg class="i"><use href="#cut"/></svg>切除-拉伸1</li>
      <li><i class="r"></i><svg class="i"><use href="#part"/></svg>(-) 特征成型3&lt;1&gt; (默认) &lt;</li>
      <li><i class="d"></i><svg class="i"><use href="#part"/></svg>(-) 装配体内部零件&lt;1&gt; (默</li>
      <li class="l2"><i class="d"></i><svg class="i"><use href="#matef"/></svg>装配体学习2 中的配合</li>
      <li class="l3"><svg class="i"><use href="#coin"/></svg><svg class="i"><use href="#ground"/></svg>重合4 (特征学</li>
      <li class="l3"><svg class="i"><use href="#tang"/></svg><svg class="i"><use href="#ground"/></svg>相切1 (特征学</li>
      <li class="l2"><i class="r"></i><svg class="i"><use href="#hist"/></svg>历史记录</li>
      <li class="l2"><i></i><svg class="i"><use href="#sens"/></svg>传感器</li>
      <li class="l2"><i class="r"></i><svg class="i"><use href="#ann"/></svg>注解</li>
      <li class="l2"><i class="r"></i><svg class="i"><use href="#body"/></svg>实体(1)</li>
      <li class="l2"><i></i><svg class="i"><use href="#mat"/></svg>材质 &lt;未指定&gt;</li>
      <li class="l2"><i></i><svg class="i"><use href="#plane"/></svg>前视基准面</li>
      <li class="l2"><i></i><svg class="i"><use href="#plane"/></svg>上视基准面</li>
      <li class="l2"><i></i><svg class="i"><use href="#plane"/></svg>右视基准面</li>
      <li class="l2"><i></i><svg class="i"><use href="#orig"/></svg>原点</li>
      <li class="l2"><i class="r"></i><svg class="i"><use href="#boss"/></svg>凸台-拉伸1</li>
      <li><i class="r"></i><svg class="i"><use href="#mates"/></svg>Mates</li>
    </ul>
    <div class="rollback"></div>
    <div class="hscroll"><i></i></div>
  </aside>
  <section class="view">
    <svg class="model" viewBox="290 172 3550 1864">
      <g stroke="#111" stroke-width="1.500" stroke-linejoin="round">
        <path d="M2326.500 585L2395 694.500 2329 802.500 2260.500 693z" fill="#d4d4d4"/>
        <path d="M2326.500 585L2446 582 2515 691.500 2395 694.500z" fill="#fafafa"/>
        <path d="M2395 694.500L2515 691.500 2448.500 799 2329 802.500z" fill="#9b9b9b"/>
        <ellipse cx="2420.500" cy="638" rx="24" ry="13.500" transform="rotate(34 2420.500 638)" fill="url(#bore)"/>
        <path d="M2406 647q-4-12 5-12 9 1 16 9-3 6-12 9-6-2-9-6z" fill="#b4b4b4" stroke="none"/>
        <path d="M2403 640q2-6 10-4 9 2 14 9" fill="none"/>
        <path d="M2827 950L3102 1387 3022.600 1517 2951.500 1403 2754.800 1066z" fill="#d4d4d4"/>
        <path d="M2827 950L3581.400 1375.600 3102 1387.300z" fill="#fafafa"/>
        <path d="M3102 1387.300L3581.400 1375.600 3501.800 1505.400 3022.600 1516.800z" fill="#9b9b9b"/>
        <path d="M2203.500 965L2479.400 1402.300 2399 1532 2131.400 1081.600z" fill="#d4d4d4"/>
        <path d="M2203.500 965L2682.700 953.400 2958 1391 2479.400 1402.300z" fill="#fafafa"/>
        <path d="M2479.400 1402.300L2958 1391 2878.400 1520.400 2399.200 1531.800z" fill="#9b9b9b"/>
        <path d="M2058.800 968.700L1978.500 1096.500 1900 1273V1300z" fill="#d4d4d4"/>
        <path d="M2058.800 968.700L2334.700 1405.600 1800 1418.500V1540z" fill="#fafafa" stroke="none"/>
        <path d="M1900 1319L2058.800 968.700 2334.700 1405.600 1800 1418.500" fill="#fafafa"/>
        <path d="M2334.700 1405.600L2255 1535 1800 1546V1418.500z" fill="#9b9b9b"/>
      </g>
      <g stroke="#111" stroke-width="1.500">
        <path d="M2522 1279L2762 1273C2795 1276 2825 1305 2825 1322 2825 1334 2815 1338 2807 1338.500L2565 1344.500C2535 1342 2503 1312 2503 1293 2503 1283 2510 1279.500 2522 1279z" fill="#fdfdfd"/>
        <path d="M2522 1279L2762 1273 2736.400 1317 2516 1322 2506 1307z" fill="#9b9b9b"/>
        <path d="M2522 1279Q2503 1280 2503 1293 2503 1301 2506 1307z" fill="#d0d0d0"/>
        <path d="M2762 1273C2795 1276 2825 1305 2825 1322 2825 1334 2815 1338 2807 1338.500L2784 1339Q2765 1319 2736.400 1317z" fill="url(#hole)"/>
        <ellipse cx="2580.300" cy="1177.400" rx="46" ry="25.800" transform="rotate(32.200 2580.300 1177.400)" fill="url(#hole)"/>
        <path d="M2672 1113L2534.700 1336Q2550 1345 2565 1344.500L2638.800 1342.400 2750.500 1165z" fill="url(#rod)"/>
        <ellipse cx="2711.400" cy="1137.800" rx="46" ry="25.800" transform="rotate(32.200 2711.400 1137.800)" fill="#fdfdfd"/>
      </g>
      <path d="M2297 753h-11.600L2358 634.500 2489 631.600 2484.800 641" fill="none" stroke="#ff8a1a" stroke-width="2"/>
      <g class="label" transform="translate(2346 657) skewX(-28)"><text x="0" y="0">基</text><text x="29" y="0">准</text><text x="57" y="0">面</text><text x="85" y="0">1</text></g>
      <g stroke-linecap="round"><path d="M351 1958L362 1937" stroke="#006400" stroke-width="6"/><path d="M358 1932l11-6v15l-6 0z" fill="#005a00" stroke="#005a00" stroke-width="2"/><path d="M352 1958l12 22" stroke="#0000a8" stroke-width="6"/><path d="M359 1979l10-3v14l-9-6z" fill="#0000a8" stroke="#0000a8" stroke-width="2"/><path d="M355 1958h16" stroke="#c00000" stroke-width="6"/><path d="M371 1951l14 7-14 6z" fill="#b80000"/><circle cx="351" cy="1954" r="3" fill="#8fe08f"/></g>
      <g font-size="13"><text x="370" y="1921" fill="#1a8a1a">Y</text><text x="388" y="1957" fill="#ff4040">X</text><text x="371" y="1996" fill="#4444ff">Z</text></g>
    </svg>
    <div class="handle"><i></i></div>
    <nav class="hud">
      <svg class="i"><use href="#zfit"/></svg><svg class="i"><use href="#zarea"/></svg><svg class="i" viewBox="0 0 28 28"><use href="#scope"/><path d="M13 18l7-6v4h8v5h-8v4z" fill="#4a9ec6" stroke="#174e6b"/></svg><svg class="i" viewBox="0 0 28 28"><path d="M1 5q13-7 26 0v17q-5 0-8 1V8q-4-2-8 0v19L1 25z" fill="#eee" stroke="#444"/><path d="M1 9l10-2v18L1 27zM20 7l7-2v17l-7 1z" fill="#4a9ec6" stroke="#123f58"/></svg><svg class="i" viewBox="0 0 28 28"><use href="#scope"/><use href="#bolt" x="1" y="0" width="14" height="15"/><text x="20" y="27" text-anchor="middle" class="serif" font-size="21" fill="#3788b0" stroke="#17506e" stroke-width=".7">A</text></svg><svg class="i" viewBox="0 0 28 28"><path d="M9 0h18v19M1 8l8-8M20 8l7-8M20 28l7-9" fill="none" stroke="#333"/><path d="M1 9h19v18H1z" fill="url(#gb)" stroke="#123f58"/><path d="M14 2v6M26 13h-6" stroke="#222" stroke-width="2"/></svg><i class="dd"></i>
      <svg class="i" viewBox="0 0 28 28"><path d="M3 5l9-4 13 4v17l-8 5L3 23z" fill="#f0f0f0" stroke="#333"/><path d="M3 5l13 3v19L3 23z" fill="#9fd2ea" stroke="#123f58"/><path d="M12 7l8-4M16 8l9-3" stroke="#333"/></svg><i class="dd"></i>
      <svg class="i" viewBox="0 0 28 28"><path d="M0 14Q14-4 28 14 14 32 0 14z" fill="#eee" stroke="#666"/><circle cx="14" cy="13" r="7" fill="#444"/><path d="M15 2v24" stroke="#222" stroke-width="1.500"/></svg><i class="dd"></i>
      <svg class="i"><use href="#appear"/></svg><svg class="i"><use href="#scene"/></svg><i class="dd"></i>
      <svg class="i" viewBox="0 0 28 28"><path d="M2 4h24v16H2z" fill="url(#gg)" stroke="#333" stroke-width="2"/><path d="M14 21v4M10 25.500h8" stroke="#333" stroke-width="2"/></svg><i class="dd"></i>
    </nav>
    <div class="docctl">
      <svg width="18" height="24" viewBox="0 0 18 24"><path d="M1 1h16v21H1z" fill="none" stroke="#999" stroke-width="1.800"/><path d="M6 8v8l-5-4z" fill="#999"/></svg>
      <svg width="18" height="24" viewBox="0 0 18 24"><path d="M1 1h16v21H1z" fill="none" stroke="#999" stroke-width="1.800"/><path d="M13 8v8l4-4z" fill="#999"/></svg>
      <svg width="16" height="24" viewBox="0 0 16 24"><path d="M0 20h16" stroke="#999" stroke-width="3"/></svg>
      <svg width="24" height="24" viewBox="0 0 24 24"><path d="M1 9h15v12H1zM8 9V2h15v12h-7" fill="none" stroke="#999" stroke-width="1.500"/></svg>
      <svg width="16" height="24" viewBox="0 0 16 24"><path d="M0 4l16 16M16 4L0 20" stroke="#999" stroke-width="2"/></svg>
    </div>
    <div class="toast"><svg width="23" height="23" viewBox="0 0 23 23"><circle cx="11.500" cy="11.500" r="11.200" fill="#31a847"/><path d="M6.500 12l3.500 3.500 6.500-7" fill="none" stroke="#fff" stroke-width="2"/></svg>已复制到剪贴板</div>
    <div class="taskpane">
      <span><svg class="i" viewBox="0 0 28 28"><circle cx="14" cy="14" r="14" fill="#1c5674"/><path d="M11 9l7 5-7 5z" fill="none" stroke="#fff"/></svg></span><span><svg class="i"><use href="#home"/></svg></span><span><svg class="i" viewBox="0 0 28 28"><path d="M3 5l5-3 3 1 4-2 4 1 4-1 3 2v20l-6 4-8-1-9-2z" fill="#aaa" stroke="#222"/><path d="M8 6v20M14 5v20M20 5v20" stroke="#222"/></svg></span><span><svg class="i"><use href="#folder"/></svg></span><span><svg class="i" viewBox="0 0 28 28"><path d="M1 2h26v25H1z" fill="#fff" stroke="#222" stroke-width="1.500"/><path d="M4 5h10v6H4zM18 5h6v6h-6zM7 15h5v4h3v5H4v-5h3z" fill="#f1c21c" stroke="#5a4300"/><path d="M18 16h9v11h-9z" fill="#ddd" stroke="#333"/></svg></span><span><svg class="i"><use href="#ball"/></svg></span><span><svg class="i"><use href="#props"/></svg></span>
    </div>
    <div class="nvidia">
      <svg width="140" height="140" viewBox="0 0 140 140"><rect width="140" height="140" fill="#76b900"/><path d="M57 36h63v68H57z" fill="#fff"/><path d="M57 44Q33 47 20 65 33 93 57 95v-4Q37 86 30 66 39 52 57 50z" fill="#fff"/><path d="M57 56Q45 58 38 68 44 84 57 86v-5Q49 79 46 68 50 63 57 62z" fill="#fff"/><path d="M57 45Q82 43 96 65 83 85 57 86v-5Q77 78 87 65 76 49 57 50z" fill="#76b900"/><path d="M57 57Q70 56 78 65L69 74 61 63 57 62zM57 91Q84 90 101 72L112 78Q92 96 57 95z" fill="#76b900"/></svg>
      <p>点击 Alt+Z，打开 NVIDIA 信息浮窗</p>
    </div>
    <div class="ctxbar">
      <span class="on"><svg class="i" viewBox="0 0 28 28"><path d="M1 2h26v24H1z" fill="none" stroke="#222" stroke-width="2" stroke-dasharray="3 2"/></svg></span>
      <span><svg class="i" viewBox="0 0 28 28"><ellipse cx="14" cy="8" rx="13" ry="6.500" fill="none" stroke="#333" stroke-width="2.200"/><path d="M27 9q-3 6-9 4m4-2q-1 9-9 15" fill="none" stroke="#333" stroke-width="2.500"/></svg></span>
      <span class="hot"><svg class="i" viewBox="0 0 28 28"><use href="#funnel" x="0" y="5" width="21" height="23"/><use href="#cursor" x="13" y="0" width="18" height="18"/></svg></span><span class="arr"><i class="dd"></i></span>
      <span><svg class="i" viewBox="0 0 28 28"><use href="#cursor" x="-4" y="3" width="18" height="22"/><use href="#cursor" x="3" y="5" width="18" height="22"/><use href="#cursor" x="9" y="7" width="18" height="21"/><path d="M14 5l7-5v3h7v5h-7v4z" fill="#4a9ec6" stroke="#174e6b"/></svg></span>
      <span><svg class="i" viewBox="0 0 28 28"><path d="M13 1h13v12H13z" fill="#fff" stroke="#444"/><path d="M8 4h13v13H8z" fill="#3a93c0" stroke="#174e6b"/><path d="M2 9h12v12H2z" fill="#fff" stroke="#444"/><use href="#cursor" x="8" y="9" width="19" height="20"/></svg></span>
      <span class="on"><svg class="i"><use href="#cursor"/></svg></span><span class="arr"><i class="dd"></i></span>
      <span><svg class="i" viewBox="0 0 28 28"><circle cx="12" cy="12" r="11" fill="none" stroke="#444" stroke-width="1.500"/><use href="#cursor" x="11" y="9" width="20" height="20"/></svg></span>
    </div>
    <ul class="ctx">
      <li><svg class="i"><use href="#zfit"/></svg>整屏显示</li>
      <li><svg class="i"><use href="#zarea"/></svg>局部放大</li>
      <li><svg class="i"><use href="#zinout"/></svg>放大或缩小</li>
      <li><svg class="i"><use href="#rot"/></svg>旋转视图</li>
      <li><svg class="i"><use href="#pan"/></svg>平移</li>
      <li><svg class="i"><use href="#roll"/></svg>翻滚视图</li>
      <li><svg class="i"></svg>旋转视图</li>
      <li><svg class="i"><use href="#scope"/></svg>视图定向</li>
      <li class="t s"><svg class="i"><use href="#editapp"/></svg>编辑布景</li>
      <li class="t"><svg class="i"><use href="#showhide"/></svg>显示隐藏</li>
      <li class="t s"><svg class="i"><use href="#openasm"/></svg>打开工程图</li>
      <li class="t"><svg class="i"><use href="#anchor"/></svg>临时固定</li>
      <li class="t s"><svg class="i"></svg>最近的命令</li>
    </ul>
    <ul class="sub">
      <li class="hov"><svg class="i" viewBox="0 0 28 28"><use href="#funnel" x="3" y="0" width="16" height="18"/><use href="#funnel" x="7" y="5" width="16" height="18"/><use href="#funnel" x="11" y="9" width="16" height="19"/></svg>选择所有过滤器</li>
      <li class="prs"><svg class="i"><use href="#cursor"/></svg>选择</li>
      <li class="rule"></li>
      <li><svg class="i" viewBox="0 0 28 28"><circle cx="8" cy="7.500" r="4" fill="#3a8fb8" stroke="#174e6b"/></svg>过滤顶点</li>
      <li><svg class="i" viewBox="0 0 28 28"><path d="M8 0v28" stroke="#25749c" stroke-width="2"/></svg>过滤边线</li>
      <li><svg class="i" viewBox="0 0 28 28"><path d="M1 0h19v20H1z" fill="url(#gb)" stroke="#123f58" stroke-width="1.500"/></svg>过滤面</li>
      <li><svg class="i" viewBox="0 0 28 28"><path d="M0 11L11 3q3 5 6-1l2-1 8 8-13 10q-3-3-6 3z" fill="url(#gb)" stroke="#123f58"/></svg>过滤曲面实体</li>
      <li><svg class="i"><use href="#cube"/></svg>过滤实体</li>
      <li><svg class="i" viewBox="0 0 28 28"><path d="M0 23L23 1" stroke="#25749c" stroke-width="2" stroke-dasharray="8 2 3 2"/></svg>过滤基准轴</li>
      <li><svg class="i" viewBox="0 0 28 28"><path d="M1 7l16-4v14L1 21z" fill="url(#gb)" stroke="#123f58"/><path d="M9 0v27" stroke="#123" stroke-dasharray="5 2"/></svg>过滤基准面</li>
      <li><svg class="i" viewBox="0 0 28 28"><path d="M4 3h9v8H4z" fill="url(#gb)" stroke="#123f58" stroke-width="1.500"/></svg>过滤草图点</li>
      <li><svg class="i" viewBox="0 0 28 28"><path d="M2 6h26M2 12h26M2 18h26M8 0v25M14 0v25M20 0v25M26 0v25" stroke="#ddd"/><path d="M20 1H2v14q1 10 12 10h14" fill="none" stroke="#25749c" stroke-width="2"/></svg>过滤草图</li>
      <li><svg class="i" viewBox="0 0 28 28"><path d="M5 3v18" stroke="#222" stroke-width="2"/><path d="M5 3h19" stroke="#25749c" stroke-width="2"/><path d="M3 1h4v4H3zM22 1h4v4h-4zM3 19h4v4H3z" fill="#fff" stroke="#222"/></svg>过滤草图线段</li>
      <li><svg class="i" viewBox="0 0 28 28"><path d="M0 23L23 1" stroke="#25749c" stroke-width="2"/><path d="M10 10h4v4h-4z" fill="#fff" stroke="#222"/></svg>过滤中间点</li>
      <li><svg class="i" viewBox="0 0 28 28"><circle cx="12" cy="12" r="8" fill="none" stroke="#333" stroke-width="1.800"/><path d="M12 0v8M12 16v8M0 12h8M16 12h9M12 10v4M10 12h4" stroke="#25749c" stroke-width="2"/></svg>过滤中心符号线</li>
      <li><svg class="i" viewBox="0 0 28 28"><path d="M2 1h9v21H2zM11 4h15v14H11z" fill="#f4f4f4" stroke="#333" stroke-width="1.400"/><path d="M0 11h28" stroke="#25749c" stroke-width="1.800" stroke-dasharray="4 1"/></svg>过滤中心线</li>
      <li><svg class="i" viewBox="0 0 28 28"><path d="M1 14L15 2M1 14l7 8M15 2l8 6M3 12l2-5M14 3l-5 1" stroke="#222" stroke-width="2" fill="none"/><path d="M8 22l15-14" stroke="#25749c" stroke-width="2"/></svg>过滤尺寸/孔标注</li>
      <li><svg class="i" viewBox="0 0 28 28"><path d="M1 14h13L8 26zM12 20L19 1h9" fill="none" stroke="#333" stroke-width="2"/></svg>过滤表面粗糙度符号</li>
      <li><svg class="i" viewBox="0 0 28 28"><path d="M0 1h28v12H0zM13 1v12" fill="#eee" stroke="#333" stroke-width="1.500"/><path d="M2 9h9q-4-7-9 0" fill="none" stroke="#333"/><text x="15" y="11" font-size="9" fill="#222">0.3</text></svg>过滤形位公差</li>
      <li><svg class="i" viewBox="0 0 28 28"><circle cx="17" cy="9" r="9" fill="#eee" stroke="#555"/><text x="17" y="14" text-anchor="middle" font-size="13" font-weight="700" fill="#333">N</text><path d="M0 26l10-10" stroke="#222" stroke-width="2"/></svg>过滤注释/零件序号</li>
      <li><svg class="i" viewBox="0 0 28 28"><path d="M1 1h17v16H1z" fill="#eee" stroke="#333" stroke-width="1.500"/><text x="9.500" y="14" text-anchor="middle" font-size="14" font-weight="600" fill="#333">A</text><path d="M9.500 17v7M4 27l5.500-5 5.500 5z" fill="#222" stroke="#222" stroke-width="2"/></svg>过滤基准特征</li>
      <li><svg class="i" viewBox="0 0 28 28"><path d="M0 19L8 5h16l4-5M24 5l4 5M14 5v7l8-7" fill="none" stroke="#333" stroke-width="2"/></svg>过滤焊接符号</li>
      <li><svg class="i" viewBox="0 0 28 28"><path d="M1 0h3v9h10v4H1z" fill="#eee" stroke="#333"/><path d="M4 3l8 7H4z" fill="#4ab5de" stroke="#174e6b"/><path d="M1 16q4 5 0 11M6 16q4 5 0 11M11 16q4 5 0 11M15 16q3 4 0 9" fill="none" stroke="#333" stroke-width="2"/></svg>过滤焊缝</li>
      <li><svg class="i" viewBox="0 0 28 28"><circle cx="13" cy="10" r="9.500" fill="#eee" stroke="#444"/><path d="M4 9h19M0 24l6-7" stroke="#222" stroke-width="1.500"/><text x="13" y="18" text-anchor="middle" font-size="10" font-weight="700" fill="#333">A1</text></svg>过滤基准目标</li>
      <li><svg class="i" viewBox="0 0 28 28"><path d="M5 1h11v20l-5 5-6-5z" fill="#ccc" stroke="#444" stroke-width="1.500"/><path d="M1 0v18h19V0" fill="none" stroke="#222" stroke-dasharray="3 2"/></svg>过滤装饰螺纹线</li>
      <li><svg class="i" viewBox="0 0 28 28"><path d="M1 1h23v23H1z" fill="#f2f2f2" stroke="#333" stroke-width="1.500"/><text x="10" y="21" text-anchor="middle" class="serif" font-size="18" fill="#222">A</text><circle cx="18" cy="6" r="3" fill="none" stroke="#333"/></svg>过滤块</li>
      <li><svg class="i" viewBox="0 0 28 28"><circle cx="13" cy="13" r="12.500" fill="#f4f4f4" stroke="#333"/><path d="M13 13V.5A12.500 12.500 0 0 1 25.500 13zM13 13v12.500A12.500 12.500 0 0 1 .5 13z" fill="#222"/></svg>过滤销钉符号</li>
      <li><svg class="i" viewBox="0 0 28 28"><path d="M2 5h15" stroke="#222" stroke-width="2"/><path d="M17 1h9v9h-9z" fill="url(#gb)" stroke="#123f58" stroke-width="1.500"/></svg>过滤连接点</li>
      <li><svg class="i" viewBox="0 0 28 28"><path d="M2 5h24" stroke="#222" stroke-width="2"/><path d="M10 1h9v8h-9z" fill="url(#gb)" stroke="#123f58" stroke-width="1.500"/></svg>过滤步路点</li>
      <li><svg class="i" viewBox="0 0 28 28"><path d="M1 1h20v18H1z" fill="url(#gb)" stroke="#123f58" stroke-width="1.500"/><use href="#mesh" x="13" y="0" width="16" height="16"/></svg>过滤网格分面</li>
      <li><svg class="i" viewBox="0 0 28 28"><path d="M8 0v28" stroke="#25749c" stroke-width="2"/><use href="#mesh" x="13" y="0" width="16" height="16"/></svg>过滤网格分面边线</li>
      <li><svg class="i" viewBox="0 0 28 28"><circle cx="6" cy="9" r="4" fill="#3a8fb8" stroke="#174e6b"/><use href="#mesh" x="13" y="0" width="16" height="16"/></svg>过滤网格分面顶点</li>
    </ul>
  </section>
</main>

<nav class="motion"><div class="nav"><i></i><i></i><i></i><i></i></div><b class="cur">模型</b><b>3D 视图</b><b>Motion Study 1</b></nav>
<footer class="status"><span>选择过滤器指令</span><span class="st2">欠定义</span><span class="st3">在编辑 装配体</span></footer>

<div class="ime">
  <svg width="48" height="46" viewBox="0 0 28 28" preserveAspectRatio="none"><use href="#sogou"/></svg>
  <div class="imebar"><span class="zh">中</span>
    <svg width="20" height="24" viewBox="0 0 20 24"><circle cx="5" cy="7" r="3" fill="none" stroke="#0a6fd8" stroke-width="2"/><path d="M14 12h4q1 6-4 8" fill="none" stroke="#0a6fd8" stroke-width="3"/></svg>
    <svg width="20" height="26" viewBox="0 0 20 26"><rect x="5" y="1" width="9" height="15" rx="4.500" fill="#0a6fd8"/><path d="M2 12q1 8 8 8t8-8M10 20v5" fill="none" stroke="#0a6fd8" stroke-width="2"/></svg>
    <svg width="24" height="20" viewBox="0 0 24 20"><rect x="1" y="1" width="22" height="18" rx="2" fill="none" stroke="#0a6fd8" stroke-width="2"/><path d="M4 6h16M4 10h16M7 15h10" stroke="#0a6fd8" stroke-width="2.500" stroke-dasharray="3 1.500"/></svg>
    <svg width="28" height="28" viewBox="0 0 28 28"><path d="M0 10l7-3q4 4 8 0l7 3-2 7h-3v9H5v-9H2z" fill="url(#shirt)"/><circle cx="23" cy="4" r="4.500" fill="#ff5a32"/></svg>
    <svg width="22" height="22" viewBox="0 0 22 22"><g fill="#0a6fd8"><rect x="1" y="1" width="9" height="9" rx="3"/><rect x="1" y="12" width="9" height="9" rx="3"/><rect x="12" y="12" width="9" height="9" rx="3"/></g><circle cx="16.500" cy="5.500" r="3.500" fill="none" stroke="#0a6fd8" stroke-width="2"/></svg>
    <svg width="32" height="32" viewBox="0 0 32 32"><circle cx="15" cy="16" r="14" fill="#f6eef2"/><path d="M3 12q9-4 19-2l-1 9q-8 2-10-2-4 3-8-1z" fill="#f26a1e"/><path d="M9 22q5 3 8-2M7 15h2M14 14h2" stroke="#222" stroke-width="2" fill="none"/><path d="M28 6l2 5 2 1-2 2-2 5-2-5-2-2 2-1z" fill="#ffd93c"/></svg>
  </div>
</div>

<footer class="taskbar">
  <svg class="start" width="35" height="35" viewBox="0 0 35 35"><g fill="#0f84dc"><path d="M0 0h17v17H0z" fill="#2fb0f0"/><path d="M18.500 0H35v17H18.500zM0 18.500h17V35H0zM18.500 18.500H35V35H18.500z"/></g></svg>
  <div class="find"><svg width="22" height="24" viewBox="0 0 22 24"><circle cx="9" cy="10" r="7.500" fill="none" stroke="#333" stroke-width="2.500"/><path d="M14 16l6 6" stroke="#333" stroke-width="3"/></svg><span>搜索网页 &amp; 更多</span>
    <svg class="art" width="76" height="38" viewBox="0 0 76 38"><path d="M0 28q12-12 28-6l8-12q12-14 26-8 14 4 13 20-2 14-20 15H10Q1 37 0 28z" fill="#3fa3b5"/><path d="M34 26q4-22 24-24 18 2 16 18-6 14-22 17-14 0-18-11z" fill="#d98a4e"/><path d="M24 34q16-4 20-12-2-8 10-14l4 4q-8 4-6 10 2 10-12 15z" fill="#4a4a52"/><path d="M8 24l4-12 5 12zM21 20l4-14 5 14zM42 16l4-14 5 14z" fill="#e0a878"/><path d="M2 30l4-10 4 10zM30 30l4-12 4 12zM56 32l4-14 6 14zM12 36l4-10 5 10z" fill="#2c7a4a"/><path d="M58 8q8-2 12 4M60 14q6 0 8 6" stroke="#f5c878" stroke-width="3" fill="none"/></svg></div>
  <div class="apps">
    <span><svg width="36" height="36" viewBox="0 0 36 36"><path d="M0 10h27v24H0z" fill="#333"/><path d="M9 1h26v24H9z" fill="#f0f0f0" fill-opacity=".85"/></svg></span>
    <span class="run"><svg width="37" height="37" viewBox="0 0 36 36"><circle cx="18" cy="18" r="18" fill="url(#edge)"/><path d="M1 14Q5 8 14 9q9 2 9 8 0 4-3 5 5 6 13 2-6 12-17 11Q1 33 0 18z" fill="#1365b8"/><path d="M14 15q-5 7 1 14 8 7 17 2-12 0-14-8-1-4 3-7-3-3-7-1z" fill="#e2f0fa"/></svg></span>
    <span class="run"><svg width="37" height="34" viewBox="0 0 37 34"><path d="M0 3q0-3 3-3h9l4 5H0z" fill="#e0a010"/><path d="M0 5h34q3 0 3 3v23q0 3-3 3H3q-3 0-3-3z" fill="#ffcf48"/><path d="M6 34V26q0-3 3-3h20q2 0 2 3v8z" fill="#1576d2"/><path d="M13 29h12" stroke="#0b4f9c" stroke-width="2"/></svg></span>
    <span><svg width="36" height="36" viewBox="0 0 36 36"><path d="M10 7V3q0-2 2-2h12q2 0 2 2v4" fill="none" stroke="#1fa5e8" stroke-width="2.500"/><path d="M0 7h36v25q0 4-4 4H4q-4 0-4-4z" fill="#175590"/><path d="M10 13h7v7h-7z" fill="#f25022"/><path d="M18.500 13h7v7h-7z" fill="#7fba00"/><path d="M10 21.500h7v7h-7z" fill="#00a4ef"/><path d="M18.500 21.500h7v7h-7z" fill="#ffb900"/></svg></span>
    <span class="run"><svg width="33" height="33" viewBox="0 0 33 33"><rect width="33" height="33" rx="7" fill="#fff"/><text x="16.500" y="26" text-anchor="middle" class="serif" font-size="27" fill="#333">T</text></svg></span>
    <span class="run"><svg width="26" height="24" viewBox="0 0 26 28"><path d="M7 2l4 4h7l4-4v12l3 14H6q-6-4-5-9h2q0 4 4 5 2-5 0-9z" fill="#1e3c64"/><path d="M11 10h2M17 10h2" stroke="#fff" stroke-width="2"/></svg></span>
    <span class="run"><svg width="37" height="36" viewBox="0 0 37 36"><rect width="37" height="36" rx="6" fill="#a02bac"/><path d="M7 3q11 7 23 0-9 8-10 11 4 3 7 7-8-3-12-2L8 21q1-6 4-8-4-5-5-10z" fill="#fff"/><text x="18.500" y="33" text-anchor="middle" font-size="9.500" font-weight="700" fill="#fff">EDITOR</text></svg></span>
    <span class="run"><svg width="36" height="36" viewBox="0 0 36 36"><rect width="36" height="36" rx="7" fill="#00a93c"/><path d="M10 8h7v11h-7zM19 8h7v20h-7zM10 21h7v7h-7z" fill="#fff"/></svg></span>
    <span class="run"><svg width="36" height="30" viewBox="0 0 36 30"><path d="M6 1h19l4 9-11 9Q10 7 6 1z" fill="#12cfbd"/><path d="M0 8q14 14 26 5 4-4 10-4-4 14-14 19-12 4-22-5z" fill="#3370ff"/><path d="M18 18q8-9 18-9-4 8-8 13-6-1-10-4z" fill="#17389b"/></svg></span>
    <span class="act"><svg width="36" height="36" viewBox="0 0 36 36"><path d="M0 5L18 0l18 5v22l-18 8-18-8z" fill="#c41722"/><path d="M0 5l18 4 18-4" fill="none" stroke="#600"/><text x="18" y="23" text-anchor="middle" font-size="18" font-weight="700" fill="#fff">SW</text><text x="24" y="35" text-anchor="middle" font-size="10" font-weight="700" fill="#fff" stroke="#111" stroke-width="2.500" paint-order="stroke">2024</text></svg></span>
    <span class="run"><svg width="36" height="34" viewBox="0 0 36 34"><circle cx="19" cy="17" r="16.500" fill="#e8623c"/><path d="M19 .5A16.500 16.500 0 0 1 35.500 17H19z" fill="#ff9070"/><rect y="7" width="19" height="20" rx="2" fill="#c43e1c"/><text x="9.500" y="23" text-anchor="middle" font-size="16" font-weight="700" fill="#fff">P</text></svg></span>
  </div>
  <div class="weather"><svg width="40" height="44" viewBox="0 0 40 44"><circle cx="15" cy="26" r="15" fill="#f49a1c"/><circle cx="26" cy="12" r="12" fill="#c62b20"/><text x="26" y="17.500" text-anchor="middle" font-size="15" fill="#fff">4</text><path d="M14 37q-4-6 4-8 5-6 9 0 7 0 6 8z" fill="#a9c8f2"/></svg><p>36°C<br><em>大部晴朗</em></p></div>
  <div class="tray">
    <svg class="t1" width="18" height="12" viewBox="0 0 18 12"><path d="M1 10l8-8 8 8" fill="none" stroke="#222" stroke-width="2"/></svg>
    <svg class="t2" width="26" height="24" viewBox="0 0 26 24"><path d="M5 17q-6-2-3-8 3-2 5-2 4-6 10-3l4 6v7z" fill="#999" stroke="#333" stroke-width="1.500"/><circle cx="18" cy="16" r="7" fill="#d9252c"/><path d="M15.500 13.500l5 5m0-5l-5 5" stroke="#fff" stroke-width="1.500"/></svg>
    <span class="t3">中</span>
    <svg class="t4" width="26" height="24" viewBox="0 0 28 28"><use href="#sogou"/></svg>
    <svg class="t5" width="26" height="26" viewBox="0 0 26 26"><path d="M14 2H1v17h16M7 19v5M4 24h15M12 19v5M18 2h6v8h-6zM21 10v14" fill="none" stroke="#222" stroke-width="1.700"/></svg>
    <svg class="t6" width="26" height="22" viewBox="0 0 26 22"><path d="M1 7v7h4l6 5V2L5 7z" fill="none" stroke="#222" stroke-width="1.700"/><path d="M14 7q3 4 0 8M17 4q5 7 0 14" fill="none" stroke="#222" stroke-width="1.700"/><path d="M20 1q7 10 0 20" fill="none" stroke="#aaa" stroke-width="1.700"/></svg>
    <p>16:02<br>2025/7/2</p>
    <svg class="t7" width="22" height="24" viewBox="0 0 22 24"><path d="M10 4Q4 4 4 11l-3 7h17l-2-4M8 19q2 4 5 0" fill="none" stroke="#222" stroke-width="1.800"/><text x="13" y="9" font-size="10" font-weight="700" fill="#222">Z</text><text x="7" y="15" font-size="9" font-weight="700" fill="#222">z</text></svg>
  </div>
</footer>
</body>
</html>
```
FILE: styles.css
```css
* { box-sizing: border-box; }
html, body { margin: 0; padding: 0; }
body {
  width: 3840px; height: 2160px; overflow: hidden; position: relative;
  display: flex; flex-direction: column;
  background: #f7f7f7; color: #000;
  font: 18px/24px "Open Sans", "Noto Sans CJK SC", sans-serif;
}
ul { list-style: none; margin: 0; padding: 0; }
p { margin: 0; }
svg { display: block; flex: none; overflow: visible; }
.defs { position: absolute; }
.i { width: 28px; height: 28px; }
.serif { font-family: "Liberation Serif", serif; font-weight: 700; }
.dd { display: block; flex: none; width: 0; height: 0; border: 4px solid transparent; border-top: 5px solid #444; border-bottom: 0; }
.faint { border-top-color: #aaa; }

/* title bar */
.titlebar { height: 54px; flex: none; display: flex; align-items: center; border-top: 1px solid #b8b8b8; border-bottom: 1px solid #b8b8b8; }
.brand { width: 218px; height: 52px; display: flex; align-items: center; padding-left: 7px; border-right: 1px solid #ccc; }
.ds { width: 32px; height: 31px; margin-top: -3px; }
.wordmark { width: 130px; margin-left: 5px; color: #d8281e; font: italic 20px/24px "Open Sans", sans-serif; letter-spacing: .55px; white-space: nowrap; }
.play { width: 13px; height: 22px; margin-left: 21px; }
.quick { display: flex; align-items: center; width: 660px; }
.quick > .dd { margin: 0 12px 0 13px; }
.quick .q1 { margin: 0 18px 0 27px; }
.quick .q8 { margin: 0 19px 0 9px; }
.quick .q9 { margin-right: 17px; }
.quick .q3 { margin-left: 1px; }
.quick .q5 + .dd, .quick .q6 + .dd, .quick .q7 + .dd { margin-right: 13px; }
.quick .q7 + .dd { margin-right: 7px; }
.pick { width: 43px; height: 48px; background: #b0b0b0; border: 2px solid #888; display: flex; align-items: center; justify-content: center; }
.pickdd { width: 20px; height: 48px; border: 2px solid #aaa; border-left: 0; display: flex; align-items: center; justify-content: center; }
.doctitle { margin-left: 1095px; width: 191px; white-space: nowrap; font-size: 17.5px; }
.search { margin-left: 1084px; width: 303px; height: 36px; border: 1px solid #bbb; background: #fff; display: flex; align-items: center; padding: 0 6px 0 7px; color: #666; font-size: 17px; }
.search span { margin-left: 12px; flex: 1; }
.prompt, .mag { width: 20px; height: 20px; }
.search .dd { margin-left: 13px; border-top-color: #666; }
.winctl { display: flex; margin-left: 20px; gap: 32px; }

/* ribbon */
.ribbon { height: 118px; flex: none; display: flex; border-bottom: 2px solid #888; border-right: 2px solid #888; position: relative; }
.cmd { height: 114px; margin-top: 1px; display: flex; flex-direction: column; align-items: center; padding-top: 7px; line-height: 23px; position: relative; white-space: nowrap; flex: none; letter-spacing: -.5px; }
.cmd .i { margin-bottom: 1px; }
.cmd .dd { position: absolute; bottom: 9px; }
.cmd.sep { box-shadow: inset 1px 0 #c4c4c4; }
.cmd.on { background: #b0b0b0; border: 2px solid #777; padding-top: 5px; margin-left: 1px; margin-right: 2px; }
.off { color: #a9a9a9; }
.w34 { width: 34px; } .w44 { width: 44px; } .w47 { width: 47px; } .w48 { width: 48px; } .w50 { width: 50px; } .w52 { width: 52px; } .w54 { width: 54px; } .w58 { width: 58px; } .w63 { width: 63px; } .w68 { width: 68px; } .w84 { width: 84px; } .w87 { width: 87px; } .w88 { width: 88px; }
.collapse { margin: 91px 8px 0 auto; }

/* command manager tabs */
.work { flex: 1; display: flex; position: relative; min-height: 0; }
.cmtabs { position: absolute; left: 0; top: -1px; z-index: 3; display: flex; height: 34px; }
.cmtabs b, .motion b { font-weight: 400; background: #d3d3d3; border: 1px solid #888; border-left: 0; color: #222; display: flex; align-items: center; justify-content: center; white-space: nowrap; }
.cmtabs b { width: 56px; font-size: 19px; letter-spacing: -.4px; }
.cmtabs b:nth-child(6) { width: 176px; letter-spacing: -.7px; }
.cmtabs b:last-child { width: 57px; }
.cmtabs b.cur { width: 76px; background: #f7f7f7; border-top: 0; border-bottom: 0; }

/* feature manager */
.panel { width: 290px; flex: none; border-right: 2px solid #888; border-left: 1px solid #bbb; padding-top: 34px; display: flex; flex-direction: column; overflow: hidden; }
.grip { height: 29px; border-top: 2px solid #ccc; border-bottom: 1px solid #ccc; display: flex; align-items: center; justify-content: center; }
.grip i, .handle i { width: 10px; height: 8px; border-radius: 50%; background: #ccc; border: 1px solid #999; }
.ptabs { margin-top: 4px; height: 38px; display: flex; align-items: center; border-bottom: 1px solid #bbb; padding-left: 1px; }
.ptabs span { width: 52px; height: 38px; background: #d3d3d3; border: 1px solid #888; border-left: 0; display: flex; align-items: center; justify-content: center; }
.ptabs .cur { background: #fafafa; border-bottom-color: #fafafa; }
.more { margin-left: 11px; }
.filter { margin: 0 5px 0 4px; height: 38px; border: 1px solid #bbb; display: flex; align-items: center; padding-left: 5px; gap: 3px; }
.tree { margin-top: -1px; width: 286px; overflow: hidden; }
.tree li { height: 32px; display: flex; align-items: center; white-space: pre; padding-left: 12px; letter-spacing: .05px; }
.tree li > i { width: 12px; margin-right: 15px; height: 0; flex: none; position: relative; }
.tree li .i { margin-right: 7px; position: relative; top: 1px; }
.tree .r::before { content: ""; position: absolute; left: 2px; top: -6px; border: 6px solid transparent; border-left: 7px solid #606060; border-right: 0; }
.tree .d::before { content: ""; position: absolute; left: 0; top: -2px; border: 5.5px solid transparent; border-top: 6px solid #606060; border-bottom: 0; }
.tree .root { padding-left: 5px; }
.tree .root .i { margin-right: 5px; }
.tree .l2 { padding-left: 47px; }
.tree .l2 .i { margin-right: 6px; }
.tree .l3 { padding-left: 109px; }
.tree .l3 .i { margin-right: 8px; }
.tree .l3 .i + .i { margin-right: 6px; }
.rollback { width: 286px; height: 5px; background: #3292cd; border-bottom: 1.5px solid #1414a0; }
.hscroll { margin-top: auto; margin-bottom: 5px; height: 26px; background: #eee; border-top: 1px solid #fff; padding: 10px 0 0 26px; }
.hscroll i { display: block; width: 134px; height: 6px; border-radius: 3px; background: #868686; }

/* graphics area */
.view { flex: 1; position: relative; overflow: hidden;
  background:
    linear-gradient(rgba(254,254,254,0) 880px, rgba(254,254,254,.1) 1010px, rgba(254,254,254,.5) 1130px, rgba(254,254,254,.85) 1240px, rgba(254,254,254,.98) 1400px, rgba(253,253,254,1) 1550px, #f5f6f9 100%),
    radial-gradient(ellipse 2900px 1080px at 0 0, #fff 0, #fff 48%, rgba(255,255,255,.75) 67%, rgba(255,255,255,.3) 85%, rgba(255,255,255,0) 100%),
    radial-gradient(ellipse 800px 500px at 3550px 0, rgba(250,251,252,.9), rgba(245,247,250,.55) 50%, rgba(245,247,250,0) 100%),
    radial-gradient(ellipse 900px 560px at 2720px 760px, #d5dae6 0, rgba(213,218,230,.6) 45%, rgba(221,225,236,0) 100%),
    linear-gradient(90deg, #e3e6ef, #dfe2ed 55%, #dee1eb 80%, #e3e6ee);
}
.model { position: absolute; left: 0; top: 0; width: 3550px; height: 1864px; }
.label { font-family: "Noto Sans CJK SC", sans-serif; font-size: 23px; font-weight: 700; fill: #ff8f26; }
.handle { position: absolute; left: -2px; top: 901px; width: 16px; height: 60px; background: #f7f7f7; border: 1px solid #888; border-left: 0; display: flex; align-items: center; justify-content: center; }
.hud { position: absolute; left: 1531px; top: 7px; display: flex; align-items: center; gap: 10px; opacity: .75; }
.hud .dd { margin-left: -3px; }
.docctl { position: absolute; right: 18px; top: 10px; display: flex; gap: 19px; }
.toast { position: absolute; left: 1507px; top: 44px; width: 247px; height: 84px; background: #e4fae1; border: 2px solid #35a845; border-radius: 9px; box-shadow: 0 8px 12px rgba(0,0,0,.12); display: flex; align-items: center; padding-left: 30px; gap: 13px; font-size: 21px; color: #222; white-space: nowrap; }
.taskpane { position: absolute; right: 0; top: 76px; width: 40px; border-left: 1px solid #888; background: #e4e4e4; }
.taskpane span { height: 36px; border-top: 1px solid #888; display: flex; align-items: center; justify-content: center; }
.taskpane span:last-child { border-bottom: 1px solid #888; }
.nvidia { position: absolute; right: 0; top: 38px; width: 600px; height: 180px; background: rgba(30,30,30,.96); border-left: 10px solid #76b900; display: flex; padding: 20px 0 0 32px; box-shadow: 0 6px 24px rgba(0,0,0,.5); }
.nvidia p { margin: 29px 0 0 32px; width: 366px; font: 28px/40px "Noto Sans", "Noto Sans CJK SC", sans-serif; color: #c6c6c6; }

/* shortcut toolbar and menus */
.ctxbar, .ctx, .sub { position: absolute; background: #f7f7f7; border: 1px solid #888; box-shadow: 4px 4px 2px rgba(0,0,0,.38); }
.ctxbar { left: 1211px; top: 585px; width: 346px; height: 50px; display: flex; align-items: center; padding-left: 3px; }
.ctxbar span { width: 42px; height: 42px; display: flex; align-items: center; justify-content: center; }
.ctxbar .on { background: #b0b0b0; border: 1px solid #777; }
.ctxbar .hot { background: #fff; border: 1px solid #999; }
.ctxbar .arr { width: 20px; border: 1px solid #999; border-left: 0; background: #fdfdfd; }
.ctx { left: 1211px; top: 645px; width: 200px; height: 525px; padding-top: 4px; }
.ctx li { height: 36px; display: flex; align-items: center; gap: 12px; padding-left: 8px; white-space: nowrap; position: relative; }
.ctx .t { height: 38px; }
.ctx .s::before { content: ""; position: absolute; left: 46px; right: 4px; top: 0; border-top: 1px solid #bbb; }
.sub { left: 1299px; top: 631px; width: 350px; height: 1137px; padding: 2px; }
.sub li { height: 36px; display: flex; align-items: center; gap: 12px; padding-left: 5px; white-space: nowrap; position: relative; }
/* small purple funnel over each filter icon: dark outline shape, lighter core */
.sub li:nth-child(n+4)::before, .sub li:nth-child(n+4)::after { content: ""; position: absolute; clip-path: polygon(0 0, 100% 0, 100% 22%, 66% 55%, 66% 100%, 34% 100%, 34% 55%, 0 22%); }
.sub li:nth-child(n+4)::before { left: 21px; top: 19px; width: 14px; height: 14px; background: #5b1f7c; }
.sub li:nth-child(n+4)::after { left: 23px; top: 20.5px; width: 10px; height: 11px; background: linear-gradient(90deg, #edc8fa, #b06ad2); }
.sub .hov { background: #fff; border: 1px solid #aaa; padding-left: 4px; }
.sub .prs::before { content: ""; position: absolute; left: 1px; top: 1px; width: 36px; height: 34px; background: #c2c2c4; border: 1.5px solid #777; }
.sub .prs .i { position: relative; }
.sub .rule { height: 14px; background: linear-gradient(#eee 5px, #999 5px, #999 6px, #eee 6px); }

/* bottom tabs, status */
.motion { height: 25px; flex: none; display: flex; border-top: 1px solid #777; font-size: 18px; }
.motion b { border-top: 0; border-bottom: 0; width: 160px; letter-spacing: -.3px; padding: 0 12px 2px 0; }
.motion b.cur { width: 71px; background: #f7f7f7; color: #000; padding-right: 0; padding-left: 6px; border-right: 0; }
.motion b:nth-child(3) { width: 91px; border-left: 1px solid #888; padding-right: 0; }
.nav { width: 98px; display: flex; padding-left: 1px; border-top: 2px solid #111; }
.nav i { flex: 1; background: #a6a6bc; border: 1px solid #7e7e98; display: flex; align-items: center; justify-content: center; }
.nav i::before { content: ""; border: 6px solid transparent; border-left: 8px solid #85859c; border-right: 0; }
.nav i:nth-child(-n+2)::before { transform: scaleX(-1); }
.status { height: 29px; flex: none; display: flex; align-items: center; border-top: 1px solid #777; border-bottom: 2px solid #aeb6c2; padding-left: 1px; }
.st2 { margin-left: 3260px; }
.st3 { margin-left: 19px; }

.ime { position: absolute; left: 3537px; top: 2043px; display: flex; z-index: 4; }
.ime > svg { position: relative; z-index: 1; }
.imebar { width: 275px; margin: 6px 0 0 -20px; height: 38px; background: #fff; border: 1px solid #c3d3e6; border-right: 0; display: flex; align-items: center; padding-left: 28px; gap: 12px; }
.zh { color: #0a6fd8; font-size: 24px; font-weight: 700; width: 24px; }

/* taskbar */
.taskbar { height: 70px; flex: none; display: flex; align-items: center; position: relative; background: linear-gradient(90deg, #e3eff8 0, #e3eef9 780px, #d3e0f8 900px, #d6daf4 1150px, #dbe0f5 1700px, #e0e8f7 2400px, #e2edf8 100%); }
.start { margin-left: 31px; }
.find { width: 325px; height: 47px; margin-left: 22px; border-radius: 24px; background: #f8fbfe; border: 1px solid #ccd6e2; display: flex; align-items: center; padding-left: 16px; font-size: 21px; letter-spacing: -.2px; color: #555; white-space: nowrap; overflow: hidden; }
.find span { margin-left: 15px; width: 180px; }
.art { margin-left: 14px; }
.apps { display: flex; margin-left: 6px; }
.apps span { width: 66px; height: 70px; display: flex; align-items: center; justify-content: center; position: relative; }
.apps .run::after, .apps .act::after { content: ""; position: absolute; left: 28px; bottom: 7px; width: 9px; height: 5px; border-radius: 3px; background: #858b93; }
.apps .act::before { content: ""; position: absolute; left: 5px; top: 6px; width: 56px; height: 57px; border-radius: 6px; background: #eef1fb; }
.apps .act svg { position: relative; }
.apps .act::after { left: 21px; width: 24px; background: #0a74d4; }
.weather { display: flex; align-items: center; margin-left: 2025px; gap: 5px; line-height: 25px; color: #222; width: 125px; white-space: nowrap; }
.weather p, .tray p { margin-top: -3px; }
.weather svg { margin-top: -4px; }
.weather em { font-style: normal; color: #666; }
.tray { display: flex; align-items: center; margin-left: 117px; }
.tray p { text-align: right; width: 80px; margin-left: 15px; line-height: 25px; color: #222; letter-spacing: -.3px; white-space: nowrap; }
.t2 { margin-left: 26px; }
.t3 { margin-left: 24px; width: 24px; font-size: 22px; color: #333; }
.t4 { margin-left: 31px; }
.t5 { margin-left: 31px; }
.t6 { margin-left: 10px; }
.t7 { margin-left: 13px; }
```
